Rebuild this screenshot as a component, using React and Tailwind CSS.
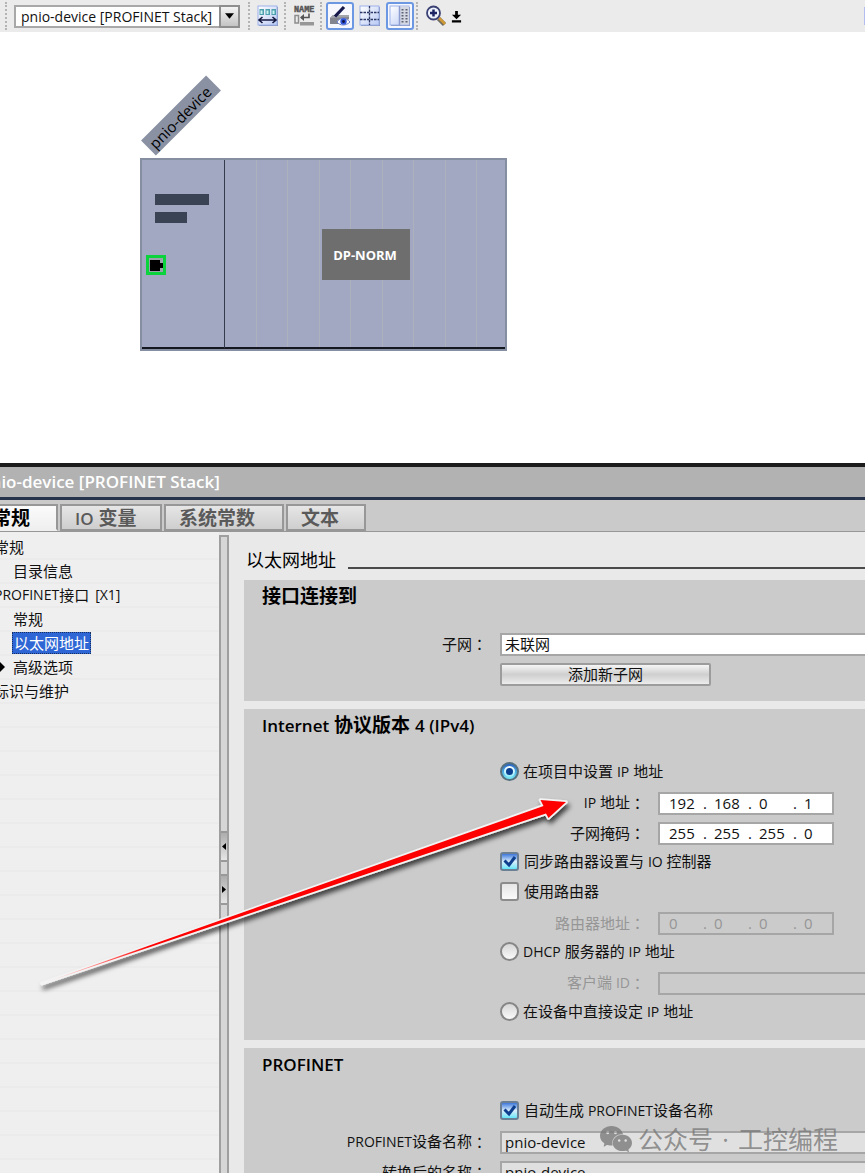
import { useState } from "react";
import { SiWechat } from "react-icons/si";

const treeItems = [
  { label: "常规", level: 0 },
  { label: "目录信息", level: 1 },
  { label: "接口", prefix: "PROFINET", suffix: " [X1]", level: 0 },
  { label: "常规", level: 1 },
  { label: "以太网地址", level: 1, selected: true },
  { label: "高级选项", level: 1, arrow: true },
  { label: "标识与维护", level: 0 },
];

const emptyRows = Array.from({ length: 20 });

function En({ children }) {
  return <span className="text-[14px]">{children}</span>;
}

function Colon() {
  return <span className="font-['Noto_Sans_CJK_TC',sans-serif]">：</span>;
}

function Separator({ className }) {
  return (
    <span className={`h-7 border-l-2 border-dotted border-[#b4b4b4] ${className}`} />
  );
}

function ToolButton({ label, active, children }) {
  return (
    <button
      aria-label={label}
      className={`flex h-7 w-7 shrink-0 items-center justify-center rounded-[3px] ${
        active ? "border-2 border-[#6b97e3] bg-[#f6f8fd]" : ""
      }`}
    >
      {children}
    </button>
  );
}

function IconFrame({ children }) {
  return (
    <svg width="22" height="22" viewBox="0 0 22 22" className="shrink-0">
      <defs>
        <linearGradient id="frameFill" x1="0" y1="0" x2="1" y2="1">
          <stop offset="0" stopColor="#ffffff" />
          <stop offset="1" stopColor="#b9c9f4" />
        </linearGradient>
      </defs>
      <rect x="2" y="2" width="19" height="19" fill="#8592b8" />
      <rect x="1" y="1" width="19" height="19" fill="url(#frameFill)" stroke="#9db2ea" />
      {children}
    </svg>
  );
}

function Toolbar() {
  return (
    <div className="flex h-8 shrink-0 items-center overflow-hidden bg-[#ebebeb]">
      <Separator className="ml-[5px]" />
      <div className="relative ml-[7px] h-[23px] w-[226px] shrink-0">
        <select
          aria-label="设备"
          className="h-full w-full appearance-none border-2 border-[#a8a8a8] bg-white pl-[5px] text-[14px] leading-[19px]"
        >
          <option>pnio-device [PROFINET Stack]</option>
        </select>
        <span className="pointer-events-none absolute top-0 right-0 flex h-[23px] w-[21px] items-center justify-center border-2 border-[#8e8e8e] bg-linear-to-b from-[#f4f4f4] to-[#c4c4c4]">
          <svg width="9" height="6" viewBox="0 0 10 6">
            <path d="M0 0h10L5 6z" fill="#000" />
          </svg>
        </span>
      </div>
      <Separator className="mr-1 ml-2" />
      <ToolButton label="设备宽度">
        <IconFrame>
          <path d="M2.500 4h4.500v6H2.500zM8.500 4h4.500v6H8.500zM14.500 4H19v6h-4.500z" fill="#4e9fae" />
          <path d="M3.500 5.500h2v3.500h-2zM9.500 5.500h2v3.500h-2zM15.500 5.500h2v3.500h-2z" fill="#c9f2f2" />
          <path d="M2 15h17M5.500 12l-3.500 3 3.500 3M15.500 12l3.500 3-3.500 3" stroke="#15193f" strokeWidth="1.600" fill="none" />
        </IconFrame>
      </ToolButton>
      <Separator className="mr-1 ml-0.5" />
      <ToolButton label="设备名称">
        <svg width="22" height="22" viewBox="0 0 22 22">
          <text x="1" y="7" fontSize="8.500" fontWeight="700" fill="#555" stroke="#555" strokeWidth="0.400" fontFamily="Liberation Mono, monospace">
            NAME
          </text>
          <path d="M2 10.500h3.500v7.500H2z" fill="#ececec" stroke="#8d8d8d" strokeWidth="1.500" />
          <path d="M7 17h14v3.500H7z" fill="#979797" />
          <path d="M16 8.500v4H8" stroke="#555" strokeWidth="1.600" fill="none" />
          <path d="M7 12.500L11 9v7z" fill="#555" />
        </svg>
      </ToolButton>
      <Separator className="mr-1 ml-0.5" />
      <ToolButton label="显示地址" active>
        <svg width="22" height="22" viewBox="0 0 22 22" className="shrink-0">
          <path d="M1 13l3-3h16v4l-8 5H1z" fill="#84868f" />
          <path d="M1 13l3-3h16v2z" fill="#a2a4ac" />
          <path d="M6 11.500L15 2" stroke="#14184a" strokeWidth="3.200" />
          <path d="M8 17c3-5 9-5 13 0-4 4-10 4-13 0z" fill="#fff" stroke="#6f83c9" />
          <circle cx="14.500" cy="16.500" r="3.200" fill="#3055d8" />
          <circle cx="14.500" cy="16.500" r="1.400" fill="#0c1240" />
        </svg>
      </ToolButton>
      <span className="w-0.5" />
      <ToolButton label="表格">
        <IconFrame>
          <path d="M10.500 1v19M1 7.500h19M1 14.500h19" stroke="#2b3767" strokeWidth="1.300" strokeDasharray="2.500 1" />
        </IconFrame>
      </ToolButton>
      <span className="w-0.5" />
      <ToolButton label="设备概览" active>
        <IconFrame>
          <path d="M11 1.500h9v18h-9z" fill="#d3d7e2" />
          <path d="M10.500 1v19" stroke="#8c9cd0" strokeWidth="1.500" />
          <path d="M13.500 4v14M17.500 4v14" stroke="#5d6274" strokeWidth="2" strokeDasharray="1.500 1.500" />
        </IconFrame>
      </ToolButton>
      <Separator className="mr-1 ml-0.5" />
      <ToolButton label="缩放">
        <svg width="22" height="22" viewBox="0 0 22 22">
          <path d="M13.500 13.500l6 6" stroke="#6d6a62" strokeWidth="4.500" />
          <path d="M14 13l6 6" stroke="#d29a35" strokeWidth="2.500" />
          <circle cx="8.500" cy="8" r="6.500" fill="#eef2fd" stroke="#3b4173" strokeWidth="1.800" />
          <path d="M8.500 4.500v7M5 8h7" stroke="#1d2463" strokeWidth="2.500" />
        </svg>
      </ToolButton>
      <button aria-label="更多" className="flex h-7 w-3 items-center justify-center">
        <svg width="11" height="13" viewBox="0 0 12 14">
          <path d="M4.500 1h3v4H11L6 10 1 5h3.500zM1 11h10v2.500H1z" fill="#000" />
        </svg>
      </button>
      <span className="ml-auto h-[18px] w-px bg-[#b4bdf0]" />
    </div>
  );
}

/* Device rack on the free canvas */
function DeviceView() {
  return (
    <div className="relative h-[431px] shrink-0 bg-white">
      <div className="absolute top-[73px] left-[135px] flex h-[21px] w-[92px] -rotate-45 items-center justify-center bg-[#8a91a3] pr-1 text-[15px] font-medium text-black">
        pnio-device
      </div>
      <div className="absolute top-[126px] left-[140px] flex h-[193px] w-[367px] border-2 border-[#868fa1] bg-[#a2a7c2]">
        <div className="w-[82px] border-b-2 border-b-[#14171f] pt-[34px] pl-[13px]">
          <div className="h-[11px] w-[54px] bg-[#3a4354]" />
          <div className="mt-[7px] h-[11px] w-8 bg-[#3a4354]" />
        </div>
        <div className="grid flex-1 grid-cols-[repeat(8,8fr)_7fr] border-b-2 border-l border-b-[#14171f] border-l-[#343b4c]">
          {Array.from({ length: 9 }).map((_, i) => (
            <div key={i} className="border-r border-[#adb1bb] last:border-r-0" />
          ))}
        </div>
      </div>
      <div className="absolute top-[223px] left-[146px] flex h-[20px] w-[20px] items-center justify-center border-[3px] border-[#0bd33c] bg-[#9aa3ab]">
        <svg width="13" height="11" viewBox="0 0 13 11">
          <path d="M0 0h10v3h3v5h-3v3H0z" fill="#000" />
        </svg>
      </div>
      <div className="absolute top-[197px] left-[322px] flex h-[51px] w-[88px] items-center justify-center bg-[#6e6e6e] pr-0.5 text-[13px] font-bold text-white">
        DP-NORM
      </div>
    </div>
  );
}

function Tab({ active, className, children }) {
  return (
    <button
      role="tab"
      aria-selected={!!active}
      className={`h-full shrink-0 border-2 border-[#979797] text-left ${
        active
          ? "border-b-[#efefef] border-l-0 bg-linear-to-b from-[#fbfbfb] to-[#efefef] font-bold text-black"
          : "bg-linear-to-b from-[#e6e6e6] to-[#cecece] pl-[13px] font-semibold text-[#5a5a5a]"
      } ${className}`}
    >
      {children}
    </button>
  );
}

function Tree() {
  return (
    <nav className="w-[219px] shrink-0 overflow-hidden bg-[#efefef] pt-1">
      <ul>
        {treeItems.map((item, i) => (
          <li key={i} className="flex h-6 items-center border-b-2 border-[#ebebeb] whitespace-nowrap">
            {item.arrow && (
              <svg width="5" height="10" viewBox="0 0 5 10" className="shrink-0">
                <path d="M0 0l5 5-5 5z" fill="#000" />
              </svg>
            )}
            <a
              href="#"
              className={`flex items-center ${
                item.level === 0 ? "-ml-1.5" : item.arrow ? "ml-2" : item.selected ? "ml-3" : "ml-[13px]"
              } ${
                item.selected
                  ? "h-[22px] border border-dotted border-[#18305f] bg-[#2f66d5] px-px text-white"
                  : ""
              }`}
            >
              {item.prefix && <En>{item.prefix}</En>}
              {item.label}
              {item.suffix && <span className="ml-1.5 text-[14px]">{item.suffix}</span>}
            </a>
          </li>
        ))}
        {emptyRows.map((_, i) => (
          <li key={i} className="h-6 border-b-2 border-[#ebebeb]" />
        ))}
      </ul>
    </nav>
  );
}

function Splitter() {
  return (
    <div className="mt-[3px] w-[10px] shrink-0 border-x-2 border-t-2 border-[#9f9f9f] bg-[#d6d6d6] pt-[294px]">
      <button aria-label="折叠" className="flex h-[31px] w-full items-center justify-center border-y-2 border-[#999] bg-linear-to-b from-[#adadad] to-[#e6e6e6]">
        <svg width="4" height="7" viewBox="0 0 4 7">
          <path d="M4 0v7L0 3.500z" fill="#000" />
        </svg>
      </button>
      <button aria-label="展开" className="mt-3 flex h-[31px] w-full items-center justify-center border-y-2 border-[#999] bg-linear-to-b from-[#adadad] to-[#e6e6e6]">
        <svg width="4" height="7" viewBox="0 0 4 7">
          <path d="M0 0v7l4-3.500z" fill="#000" />
        </svg>
      </button>
    </div>
  );
}

function Section({ title, children }) {
  return (
    <section className="bg-[#cbcbcb] pb-[13px]">
      <h3 className="h-12 pt-[3px] pl-[18px] text-[19px] leading-[26px] font-bold text-black">{title}</h3>
      {children}
    </section>
  );
}

function Field({ id, label, nested, disabled, children }) {
  return (
    <div className="flex h-[30px] items-center gap-[13px] pt-[3px]">
      <label
        htmlFor={id}
        className={`flex shrink-0 items-center justify-end pb-0.5 ${nested ? "w-[401px]" : "w-[243px]"} ${
          disabled ? "text-[#969696]" : ""
        }`}
      >
        {label}
        <Colon />
      </label>
      {children}
    </div>
  );
}

function TextInput({ tone = "bg-white", ...props }) {
  return (
    <input
      type="text"
      className={`h-[23px] min-w-0 flex-1 border-2 border-r-0 border-[#a6a6a6] pb-0.5 pl-[3px] leading-[19px] ${tone}`}
      {...props}
    />
  );
}

function IpInput({ id, label, value, disabled }) {
  return (
    <div
      role="group"
      aria-label={label}
      className={`flex h-[23px] w-[176px] shrink-0 items-center border-2 border-[#a6a6a6] pl-[9px] leading-[19px] ${
        disabled ? "bg-[#cbcbcb] text-[#969696]" : "bg-white"
      }`}
    >
      {value.map((octet, i) => (
        <div key={i} className="flex shrink-0">
          <input
            id={i === 0 ? id : undefined}
            aria-label={`${label} ${i + 1}`}
            defaultValue={octet}
            disabled={disabled}
            className="w-[34px] bg-transparent"
          />
          {i < 3 && <span className="w-[11px]">.</span>}
        </div>
      ))}
    </div>
  );
}

function Radio({ id, checked, onChange, children }) {
  return (
    <div className="flex h-[30px] items-center pb-0.5 pl-64">
      <span className="relative h-[19px] w-[19px]">
        <input
          type="radio"
          id={id}
          name="ipMode"
          checked={checked}
          onChange={onChange}
          className="peer block h-[19px] w-[19px] appearance-none rounded-full border-2 border-[#868686] bg-linear-to-b from-[#d6d6d6] to-[#fafafa] checked:border-[#55707f] checked:from-[#2a63c4] checked:to-[#7af0fa]"
        />
        <span className="pointer-events-none absolute inset-1 hidden items-center justify-center rounded-full bg-linear-to-b from-white to-[#8feaf8] peer-checked:flex">
          <span className="h-[7px] w-[7px] rounded-full bg-[#0a3f8f]" />
        </span>
      </span>
      <label htmlFor={id} className="ml-1">
        {children}
      </label>
    </div>
  );
}

function Checkbox({ id, defaultChecked, children }) {
  return (
    <div className="flex h-[30px] items-center pb-0.5 pl-64">
      <span className="relative h-[19px] w-[19px]">
        <input
          type="checkbox"
          id={id}
          defaultChecked={defaultChecked}
          className="peer block h-[19px] w-[19px] appearance-none rounded-[3px] border-2 border-[#8c8c8c] bg-linear-to-b from-[#e6e6e6] to-[#fafafa] checked:border-[#6b7f95] checked:from-[#3f78da] checked:via-[#d8ecfa] checked:to-[#5ee6f8]"
        />
        <svg
          viewBox="0 0 19 19"
          className="pointer-events-none absolute inset-0 hidden peer-checked:block"
        >
          <path d="M4.500 8.500l4.500 4.500 6-8" stroke="#0d3f8e" strokeWidth="3" fill="none" />
        </svg>
      </span>
      <label htmlFor={id} className="ml-[5px]">
        {children}
      </label>
    </div>
  );
}

function Properties() {
  const [mode, setMode] = useState("project");

  return (
    <main className="min-w-0 flex-1 bg-[#e9e9e9] pl-[15px]">
      <div className="flex h-12 items-end pb-[7px] text-black">
        <h2 className="ml-0.5 text-[18px] leading-[26px]">以太网地址</h2>
        <span className="mb-1 ml-3 h-0.5 flex-1 bg-[#4a4a4a]" />
      </div>

      <div className="space-y-2">
        <Section title="接口连接到">
          <Field id="subnet" label="子网">
            <TextInput id="subnet" defaultValue="未联网" />
          </Field>
          <div className="flex h-[30px] items-center pt-[3px] pl-64">
            <button className="h-[23px] w-[211px] rounded-[2px] border-2 border-[#9c9c9c] bg-linear-to-b from-[#f6f6f6] via-[#cfcfcf] to-[#ececec] leading-[19px]">
              添加新子网
            </button>
          </div>
        </Section>

        <Section
          title={
            <>
              <span className="text-[17px] font-semibold">Internet</span> 协议版本{" "}
              <span className="text-[17px] font-semibold">4 (IPv4)</span>
            </>
          }
        >
          <Radio id="modeProject" checked={mode === "project"} onChange={() => setMode("project")}>
            在项目中设置 <En>IP</En> 地址
          </Radio>
          <Field id="ip" nested label={<span><En>IP</En> 地址</span>}>
            <IpInput id="ip" label="IP 地址" value={["192", "168", "0", "1"]} />
          </Field>
          <Field id="mask" nested label="子网掩码">
            <IpInput id="mask" label="子网掩码" value={["255", "255", "255", "0"]} />
          </Field>
          <Checkbox id="sync" defaultChecked>
            同步路由器设置与 <En>IO</En> 控制器
          </Checkbox>
          <Checkbox id="router">使用路由器</Checkbox>
          <Field id="gateway" nested disabled label="路由器地址">
            <IpInput id="gateway" label="路由器地址" value={["0", "0", "0", "0"]} disabled />
          </Field>
          <Radio id="modeDhcp" checked={mode === "dhcp"} onChange={() => setMode("dhcp")}>
            <En>DHCP</En> 服务器的 <En>IP</En> 地址
          </Radio>
          <Field id="client" nested disabled label={<span>客户端 <En>ID</En></span>}>
            <TextInput id="client" tone="bg-[#cbcbcb]" disabled />
          </Field>
          <Radio id="modeDevice" checked={mode === "device"} onChange={() => setMode("device")}>
            在设备中直接设定 <En>IP</En> 地址
          </Radio>
        </Section>

        <Section title={<span className="text-[17px] font-semibold">PROFINET</span>}>
          <Checkbox id="autoName" defaultChecked>
            自动生成 <En>PROFINET</En>设备名称
          </Checkbox>
          <Field id="deviceName" label={<span><En>PROFINET</En>设备名称</span>}>
            <TextInput id="deviceName" tone="bg-[#e0e0e0]" defaultValue="pnio-device" readOnly />
          </Field>
          <Field id="convertedName" label="转换后的名称">
            <TextInput id="convertedName" tone="bg-[#e0e0e0]" defaultValue="pnio-device" readOnly />
          </Field>
        </Section>
      </div>
    </main>
  );
}

function PointerArrow() {
  return (
    <svg
      width="600"
      height="240"
      viewBox="0 0 600 240"
      className="pointer-events-none absolute top-[780px] left-0"
    >
      <defs>
        <linearGradient id="shaft" gradientUnits="userSpaceOnUse" x1="41" y1="0" x2="150" y2="0">
          <stop offset="0" stopColor="#fff" />
          <stop offset="1" stopColor="#f00" />
        </linearGradient>
        <filter id="shadow" x="-5%" y="-10%" width="110%" height="130%">
          <feDropShadow dx="2" dy="4" stdDeviation="2.500" floodColor="#000" floodOpacity="0.700" />
        </filter>
      </defs>
      <path
        d="M42 203.500L543.500 26L540.500 20L566 22L548.500 38L546 33.500z"
        fill="url(#shaft)"
        stroke="#f3f3f3"
        strokeWidth="3.500"
        strokeLinejoin="round"
        paintOrder="stroke"
        filter="url(#shadow)"
      />
    </svg>
  );
}

export default function App() {
  return (
    <div className="relative flex h-screen flex-col overflow-hidden bg-[#e9e9e9] font-['Open_Sans','Noto_Sans_CJK_SC',sans-serif] text-[15px] leading-[22px] text-[#111]">
      <Toolbar />
      <DeviceView />

      <div className="flex min-h-0 flex-1 flex-col overflow-hidden border-t-4 border-[#1c1c1c]">
        <div className="flex h-[30px] shrink-0 items-center overflow-hidden bg-[#b2b2b2]">
          <h1 className="-ml-5 text-[17px] font-semibold whitespace-nowrap text-white">
            pnio-device [PROFINET Stack]
          </h1>
        </div>
        <div className="h-[3px] shrink-0 bg-[#27324b]" />
        <div
          role="tablist"
          className="flex h-8 shrink-0 gap-0.5 border-b border-[#979797] bg-[#cacaca] pt-1 text-[19px] leading-6"
        >
          <Tab active className="-ml-2 w-[66px]">常规</Tab>
          <Tab className="w-[102px]">
            <span className="text-[17px] font-semibold">IO</span> 变量
          </Tab>
          <Tab className="w-[120px]">系统常数</Tab>
          <Tab className="w-[80px]">文本</Tab>
        </div>
        <div className="flex min-h-0 flex-1">
          <Tree />
          <Splitter />
          <Properties />
        </div>
      </div>

      <PointerArrow />
      <div className="pointer-events-none absolute right-[27px] bottom-[18px] flex items-center text-[25px] leading-8 text-[#7a7a7a]/80">
        <SiWechat className="mr-[6px] h-8 w-8" />
        <span>公众号</span>
        <span className="w-[25px] text-center">·</span>
        <span>工控编程</span>
      </div>
    </div>
  );
}
